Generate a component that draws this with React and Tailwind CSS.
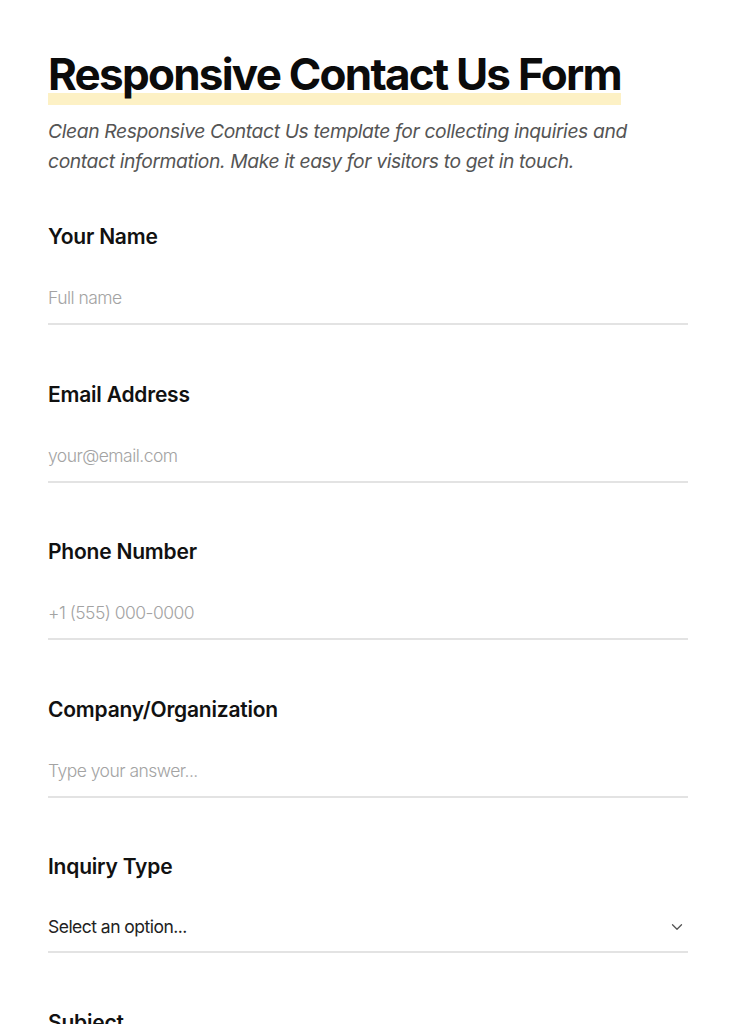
import { ChevronDown } from 'lucide-react';

const FIELDS = [
  { id: 'name', label: 'Your Name', placeholder: 'Full name', type: 'text' },
  { id: 'email', label: 'Email Address', placeholder: 'your@email.com', type: 'email' },
  { id: 'phone', label: 'Phone Number', placeholder: '+1 (555) 000-0000', type: 'tel' },
  { id: 'company', label: 'Company/Organization', placeholder: 'Type your answer...', type: 'text' },
];

function Field({ field }) {
  return (
    <div className="flex flex-col">
      <label htmlFor={field.id} className="text-[21px] font-semibold leading-[30px] tracking-[-0.01em] text-[#111]">
        {field.label}
      </label>
      <input
        id={field.id}
        type={field.type}
        placeholder={field.placeholder}
        className="mt-[17px] h-[56px] w-full border-b-2 border-[#e3e3e3] bg-transparent pt-[3px] text-[17.5px] tracking-[-0.03em] text-[#222] outline-none placeholder:font-light placeholder:text-[#a3a3a3]"
      />
    </div>
  );
}

export default function App() {
  return (
    <div className="min-h-screen bg-white px-12 pt-[50px] font-['Inter',sans-serif]">
      <h1 className="text-[44px] font-bold leading-[48px] tracking-[-0.04em] text-[#0b0b0b]">
        <span className="pb-[4px] shadow-[inset_0_-12px_0_#fdf1c5]">Responsive Contact Us Form</span>
      </h1>
      <p className="mt-[18px] text-[19.3px] italic leading-[30px] tracking-[-0.02em] text-[#555]">
        Clean Responsive Contact Us template for collecting inquiries and contact information. Make it easy for
        visitors to get in touch.
      </p>

      <div className="mt-[46px] flex flex-col gap-[54.5px]">
        {FIELDS.map((field) => (
          <Field key={field.id} field={field} />
        ))}

        <div className="flex flex-col">
          <label htmlFor="inquiry" className="text-[21px] font-semibold leading-[30px] tracking-[-0.01em] text-[#111]">
            Inquiry Type
          </label>
          <button
            id="inquiry"
            type="button"
            className="mt-[17px] flex h-[54px] w-full items-center justify-between border-b-2 border-[#e3e3e3] pt-[4px] text-[17.5px] tracking-[-0.03em] text-[#222]"
          >
            <span>Select an option...</span>
            <ChevronDown className="mr-[2px] h-[18px] w-[18px] text-[#555]" strokeWidth={1.75} />
          </button>
        </div>

        <div className="flex flex-col">
          <label className="text-[21px] font-semibold leading-[30px] tracking-[-0.01em] text-[#111]">Subject</label>
        </div>
      </div>
    </div>
  );
}
